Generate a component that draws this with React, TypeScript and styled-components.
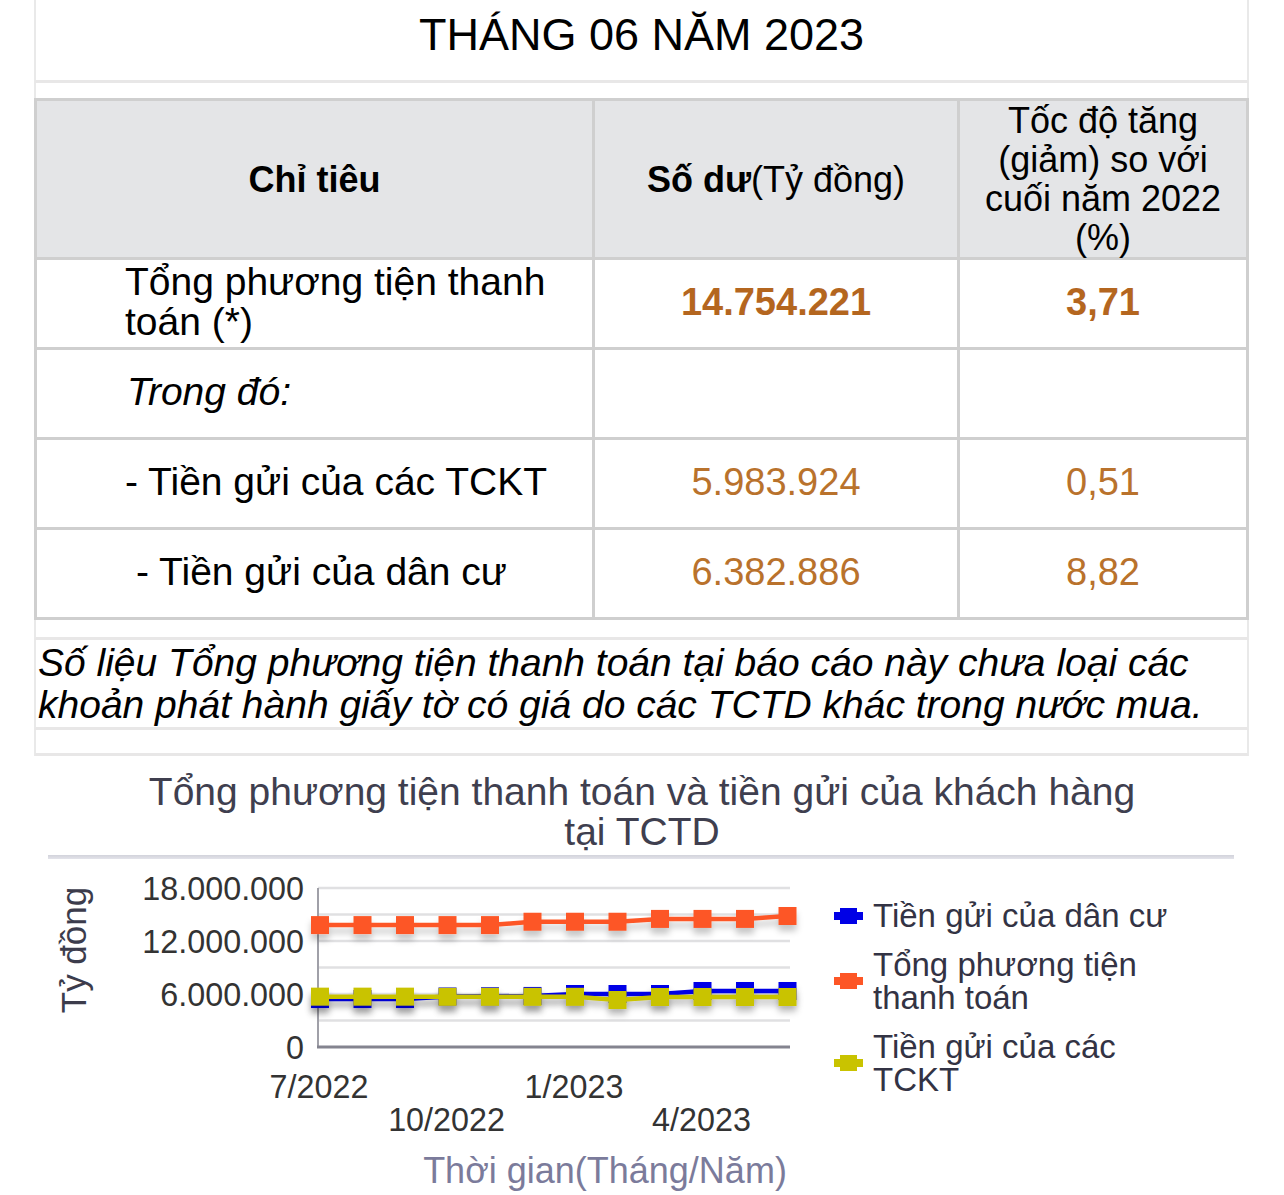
import React from "react";
import styled, { createGlobalStyle } from "styled-components";

const GlobalStyle = createGlobalStyle`
  html, body { margin: 0; padding: 0; background: #fff; }
  body {
    font-family: "Liberation Sans", Arial, Helvetica, sans-serif;
    color: #000;
  }
`;

const Page = styled.div`
  width: 1284px;
  height: 1195px;
  overflow: hidden;
`;

const Report = styled.section`
  margin-left: 34px;
  width: 1215px;
  display: flex;
  flex-direction: column;
`;

const LightRow = styled.div<{ $h: number }>`
  height: ${(p) => p.$h}px;
  border-left: 2px solid #e9e9e9;
  border-right: 2px solid #e9e9e9;
  border-bottom: 3px solid #e8e7e7;
  box-sizing: content-box;
`;

const TitleRow = styled.h1`
  margin: 0;
  height: 70px;
  padding-bottom: 10px;
  display: flex;
  align-items: center;
  justify-content: center;
  font-size: 45px;
  font-weight: 400;
  border-left: 2px solid #e9e9e9;
  border-right: 2px solid #e9e9e9;
  border-bottom: 3px solid #e8e7e7;
`;

const Spacer = styled.div`
  height: 15px;
  border-left: 2px solid #e9e9e9;
  border-right: 2px solid #e9e9e9;
`;

const DataGrid = styled.div`
  display: grid;
  grid-template-columns: 558px 365px 289px;
  grid-auto-rows: 90px;
  grid-template-rows: 159px;
  border-top: 3px solid #cfcfcf;
  border-left: 3px solid #cfcfcf;
`;

const Cell = styled.div`
  box-sizing: border-box;
  border-right: 3px solid #cfcfcf;
  border-bottom: 3px solid #cfcfcf;
  display: flex;
  align-items: center;
`;

const HeaderCell = styled(Cell)`
  background: #e4e5e7;
  justify-content: center;
  text-align: center;
  font-size: 36px;
  line-height: 39px;
`;

const Strong = styled.b`
  font-weight: 700;
`;

const LabelCell = styled(Cell)<{ $indent: number; $italic?: boolean }>`
  padding-left: ${(p) => p.$indent}px;
  padding-bottom: 4px;
  font-size: 39px;
  line-height: 40px;
  font-style: ${(p) => (p.$italic ? "italic" : "normal")};
`;

const ValueCell = styled(Cell)<{ $bold?: boolean }>`
  justify-content: center;
  padding-bottom: 2px;
  font-size: 38px;
  font-weight: ${(p) => (p.$bold ? 700 : 400)};
  color: ${(p) => (p.$bold ? "#b4661f" : "#b9722c")};
`;

const NoteRow = styled.p`
  margin: 0;
  height: 87px;
  padding-left: 2px;
  display: flex;
  align-items: center;
  font-size: 39px;
  line-height: 42px;
  font-style: italic;
  border-left: 2px solid #e9e9e9;
  border-right: 2px solid #e9e9e9;
  border-bottom: 3px solid #e8e7e7;
`;

const ChartSection = styled.section`
  display: flex;
  flex-direction: column;
`;

const ChartTitle = styled.h2`
  margin: 0;
  padding-top: 16px;
  text-align: center;
  font-size: 39px;
  line-height: 40px;
  font-weight: 400;
  color: #3f3f4f;
`;

const Separator = styled.div`
  margin: 3px 50px 0 48px;
  height: 4px;
  background: linear-gradient(#d2d3db, #e3e3ea);
`;

const ChartBody = styled.div`
  display: flex;
  align-items: flex-start;
  padding-top: 1px;
`;

const Legend = styled.ul`
  list-style: none;
  margin: 0 0 0 14px;
  padding: 39px 0 0 0;
  display: flex;
  flex-direction: column;
  gap: 16px;
`;

const LegendItem = styled.li`
  display: flex;
  align-items: center;
  gap: 10px;
`;

const LegendText = styled.span`
  width: 300px;
  font-size: 33px;
  line-height: 33px;
  color: #333344;
`;

const LegendMarker = ({ color }: { color: string }) => (
  <svg width="29" height="16" viewBox="0 0 29 16">
    <rect x="0" y="4" width="29" height="8" fill={color} />
    <rect x="6" y="0" width="17" height="16" fill={color} />
  </svg>
);

const Y0 = 187;
const SCALE = 159 / 18;
const yOf = (v: number) => Y0 - v * SCALE;
const xOf = (i: number) => 320 + i * 42.5;

const series = [
  {
    name: "Tiền gửi của dân cư",
    color: "#0000e6",
    data: [5.43, 5.43, 5.43, 5.72, 5.75, 5.78, 6.0, 6.0, 6.0, 6.34, 6.34, 6.34],
  },
  {
    name: "Tổng phương tiện thanh toán",
    color: "#fd5626",
    data: [13.8, 13.8, 13.8, 13.8, 13.8, 14.18, 14.18, 14.18, 14.5, 14.5, 14.5, 14.83],
  },
  {
    name: "Tiền gửi của các TCKT",
    color: "#c9c300",
    data: [5.7, 5.7, 5.7, 5.68, 5.68, 5.68, 5.68, 5.32, 5.66, 5.66, 5.66, 5.66],
  },
];

const drawOrder = [0, 2, 1];

const Chart = () => (
  <svg width="820" height="335" viewBox="0 0 820 335">
    <defs>
      <filter id="shadow" x="-5%" y="-50%" width="110%" height="250%">
        <feDropShadow dx="0" dy="6" stdDeviation="3" floodColor="#000" floodOpacity="0.22" />
      </filter>
    </defs>
    {[3, 6, 9, 12, 15, 18].map((v) => (
      <line key={v} x1={318} x2={790} y1={yOf(v)} y2={yOf(v)} stroke="#e0e0e2" strokeWidth={2.5} />
    ))}
    <line x1={318} x2={318} y1={yOf(18)} y2={Y0} stroke="#a0a0a8" strokeWidth={2} />
    <line x1={317} x2={790} y1={Y0} y2={Y0} stroke="#84848f" strokeWidth={3} />
    <g fontFamily='"Liberation Sans", Arial, sans-serif' fontSize="32.3" fill="#333">
      {[0, 6, 12, 18].map((v) => (
        <text key={v} x={304} y={yOf(v) + 1} textAnchor="end" dominantBaseline="central">
          {v === 0 ? "0" : `${v}.000.000`}
        </text>
      ))}
      {[
        ["7/2022", 0, 227],
        ["10/2022", 3, 260],
        ["1/2023", 6, 227],
        ["4/2023", 9, 260],
      ].map(([t, i, y]) => (
        <text key={t as string} x={xOf(i as number) - 1} y={y as number} textAnchor="middle" dominantBaseline="central">
          {t}
        </text>
      ))}
    </g>
    <text
      x={73}
      y={90}
      transform="rotate(-90 73 90)"
      textAnchor="middle"
      dominantBaseline="central"
      fontFamily='"Liberation Sans", Arial, sans-serif'
      fontSize="35"
      fill="#3c3c4c"
    >
      Tỷ đồng
    </text>
    <text
      x={605}
      y={310}
      textAnchor="middle"
      dominantBaseline="central"
      fontFamily='"Liberation Sans", Arial, sans-serif'
      fontSize="36"
      fill="#7b7b9b"
    >
      Thời gian(Tháng/Năm)
    </text>
    {drawOrder.map((si) => {
      const s = series[si];
      const pts = s.data.map((v, i) => `${xOf(i)},${yOf(v)}`).join(" ");
      return (
        <g key={s.name} filter="url(#shadow)">
          <polyline points={pts} fill="none" stroke={s.color} strokeWidth={4.5} strokeLinejoin="round" />
          {s.data.map((v, i) => (
            <rect key={i} x={xOf(i) - 9} y={yOf(v) - 9} width={18} height={18} fill={s.color} />
          ))}
        </g>
      );
    })}
  </svg>
);

const rows: { label: string; indent: number; italic?: boolean; value: string; pct: string; bold?: boolean }[] = [
  { label: "Tổng phương tiện thanh toán (*)", indent: 88, value: "14.754.221", pct: "3,71", bold: true },
  { label: "Trong đó:", indent: 90, italic: true, value: "", pct: "" },
  { label: "- Tiền gửi của các TCKT", indent: 88, value: "5.983.924", pct: "0,51" },
  { label: "- Tiền gửi của dân cư", indent: 99, value: "6.382.886", pct: "8,82" },
];

export default function App() {
  return (
    <Page>
      <GlobalStyle />
      <Report>
        <TitleRow>THÁNG 06 NĂM 2023</TitleRow>
        <Spacer />
        <DataGrid>
          <HeaderCell>
            <Strong>Chỉ tiêu</Strong>
          </HeaderCell>
          <HeaderCell>
            <span>
              <Strong>Số dư</Strong>(Tỷ đồng)
            </span>
          </HeaderCell>
          <HeaderCell>
            Tốc độ tăng
            <br />
            (giảm) so với
            <br />
            cuối năm 2022
            <br />
            (%)
          </HeaderCell>
          {rows.map((r) => (
            <React.Fragment key={r.label}>
              <LabelCell $indent={r.indent} $italic={r.italic}>
                {r.label}
              </LabelCell>
              <ValueCell $bold={r.bold}>{r.value}</ValueCell>
              <ValueCell $bold={r.bold}>{r.pct}</ValueCell>
            </React.Fragment>
          ))}
        </DataGrid>
        <LightRow $h={17} />
        <NoteRow>
          Số liệu Tổng phương tiện thanh toán tại báo cáo này chưa loại các khoản phát hành giấy tờ có giá do các
          TCTD khác trong nước mua.
        </NoteRow>
        <LightRow $h={23} />
      </Report>
      <ChartSection>
        <ChartTitle>
          Tổng phương tiện thanh toán và tiền gửi của khách hàng
          <br />
          tại TCTD
        </ChartTitle>
        <Separator />
        <ChartBody>
          <Chart />
          <Legend>
            {series.map((s) => (
              <LegendItem key={s.name}>
                <LegendMarker color={s.color} />
                <LegendText>{s.name}</LegendText>
              </LegendItem>
            ))}
          </Legend>
        </ChartBody>
      </ChartSection>
    </Page>
  );
}
